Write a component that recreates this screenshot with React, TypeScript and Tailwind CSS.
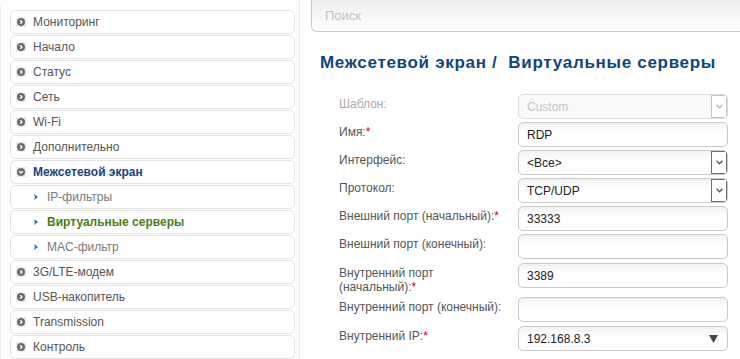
import React from 'react';

type NavItem = { label: string; sub?: boolean; open?: boolean; current?: boolean };

const nav: NavItem[] = [
  { label: 'Мониторинг' },
  { label: 'Начало' },
  { label: 'Статус' },
  { label: 'Сеть' },
  { label: 'Wi-Fi' },
  { label: 'Дополнительно' },
  { label: 'Межсетевой экран', open: true },
  { label: 'IP-фильтры', sub: true },
  { label: 'Виртуальные серверы', sub: true, current: true },
  { label: 'MAC-фильтр', sub: true },
  { label: '3G/LTE-модем' },
  { label: 'USB-накопитель' },
  { label: 'Transmission' },
  { label: 'Контроль' },
];

function RoundIcon({ open }: { open?: boolean }) {
  return (
    <span className="w-[10px] h-[10px] bg-[#ececec] flex items-center justify-center shrink-0">
      <svg width="8" height="8" viewBox="0 0 8 8">
        <circle cx="4" cy="4" r="4" fill="#6b6b6b" />
        {open ? (
          <path d="M2.2 3.2 L4 5 L5.8 3.2" stroke="#fff" strokeWidth="1.3" fill="none" />
        ) : (
          <path d="M3.2 2.2 L5 4 L3.2 5.8" stroke="#fff" strokeWidth="1.3" fill="none" />
        )}
      </svg>
    </span>
  );
}

function SubArrow() {
  return (
    <svg width="4" height="6" viewBox="0 0 4 6" className="shrink-0">
      <path d="M0 0 L4 3 L0 6 L1 3 Z" fill="#1f6cb3" />
    </svg>
  );
}

function Chevron({ color }: { color: string }) {
  return (
    <svg width="7" height="5" viewBox="0 0 7 5">
      <path d="M0.5 0.8 L3.5 3.8 L6.5 0.8" stroke={color} strokeWidth="1.3" fill="none" />
    </svg>
  );
}

function Field({ value, kind, disabled }: { value?: string; kind?: 'select' | 'ip'; disabled?: boolean }) {
  return (
    <div
      className={
        'w-[210px] h-[25px] shrink-0 rounded-[5px] border flex items-center relative overflow-hidden ' +
        (disabled
          ? 'border-[#dcdcdc] bg-[#f9f9f9]'
          : 'border-[#c9c9c9] bg-gradient-to-b from-[#f1f1f1] to-white to-[40%]')
      }
    >
      <span className={'pl-[8px] text-[12px] ' + (disabled ? 'text-[#c4c4c4]' : 'text-[#222]')}>{value}</span>
      {kind === 'select' && (
        <span
          className={
            'ml-auto h-full w-[16px] border flex items-center justify-center bg-white ' +
            (disabled ? 'border-[#c4c4c4]' : 'border-[#707070]')
          }
        >
          <Chevron color={disabled ? '#b5b5b5' : '#555'} />
        </span>
      )}
      {kind === 'ip' && (
        <svg width="9" height="8" viewBox="0 0 9 8" className="ml-auto mr-[9px]">
          <path d="M0 0 L9 0 L4.5 8 Z" fill="#444" />
        </svg>
      )}
    </div>
  );
}

function Row({
  label,
  required,
  muted,
  className = 'mb-[3px]',
  children,
}: {
  label: React.ReactNode;
  required?: boolean;
  muted?: boolean;
  className?: string;
  children: React.ReactNode;
}) {
  return (
    <div className={'flex ' + className}>
      <div className={'w-[179px] shrink-0 pt-[3px] leading-[14px] text-[12px] pr-[8px] ' + (muted ? 'text-[#aaa]' : 'text-[#555]')}>
        {label}
        {required && <span className="text-[#d10000]">*</span>}
      </div>
      {children}
    </div>
  );
}

export default function App() {
  return (
    <div className="w-[740px] h-[359px] overflow-hidden bg-white flex font-['Liberation_Sans',Arial,sans-serif]">
      {/* Sidebar */}
      <aside className="w-[300px] shrink-0 border-r border-l border-[#ececec] rounded-tl-[8px] pt-[10px] pl-[9px] pr-[4px]">
        {nav.map((item) => (
          <div
            key={item.label}
            className="h-[24px] mb-[1px] border border-[#e4e4e4] rounded-[5px] bg-white flex items-center text-[12px]"
          >
            {item.sub ? (
              <div className="flex items-center pl-[23px] gap-[9px]">
                <SubArrow />
                <span className={item.current ? 'font-bold text-[#4c7d14]' : 'text-[#7a7a7a]'}>{item.label}</span>
              </div>
            ) : (
              <div className="flex items-center pl-[5px] gap-[7px]">
                <RoundIcon open={item.open} />
                <span className={item.open ? 'font-bold text-[#16457a]' : 'text-[#555]'}>{item.label}</span>
              </div>
            )}
          </div>
        ))}
      </aside>

      {/* Content */}
      <main className="flex-1 min-w-0">
        <div className="ml-[11px] -mr-[20px] h-[32px] border-l border-b border-r border-[#c9c9c9] rounded-bl-[6px] bg-gradient-to-b from-[#eeeeee] to-white flex items-center pl-[13px]">
          <span className="text-[13px] text-[#c2c2c2]">Поиск</span>
        </div>

        <h1 className="mt-[21px] pl-[20px] leading-[20px] text-[17px] tracking-[0.7px] font-bold text-[#0d467c] whitespace-pre">
          Межсетевой экран /  Виртуальные серверы
        </h1>

        <div className="mt-[21px] pl-[39px]">
          <Row label="Шаблон:" muted>
            <Field value="Custom" kind="select" disabled />
          </Row>
          <Row label="Имя:" required>
            <Field value="RDP" />
          </Row>
          <Row label="Интерфейс:">
            <Field value="<Все>" kind="select" />
          </Row>
          <Row label="Протокол:">
            <Field value="TCP/UDP" kind="select" />
          </Row>
          <Row label="Внешний порт (начальный):" required>
            <Field value="33333" />
          </Row>
          <Row label="Внешний порт (конечный):" className="mb-[4px]">
            <Field />
          </Row>
          <Row label={<>Внутренний порт<br />(начальный):</>} required className="h-[34px]">
            <Field value="3389" />
          </Row>
          <Row label="Внутренний порт (конечный):" className="mb-[4px]">
            <Field />
          </Row>
          <Row label="Внутренний IP:" required>
            <Field value="192.168.8.3" kind="ip" />
          </Row>
        </div>
      </main>
    </div>
  );
}
